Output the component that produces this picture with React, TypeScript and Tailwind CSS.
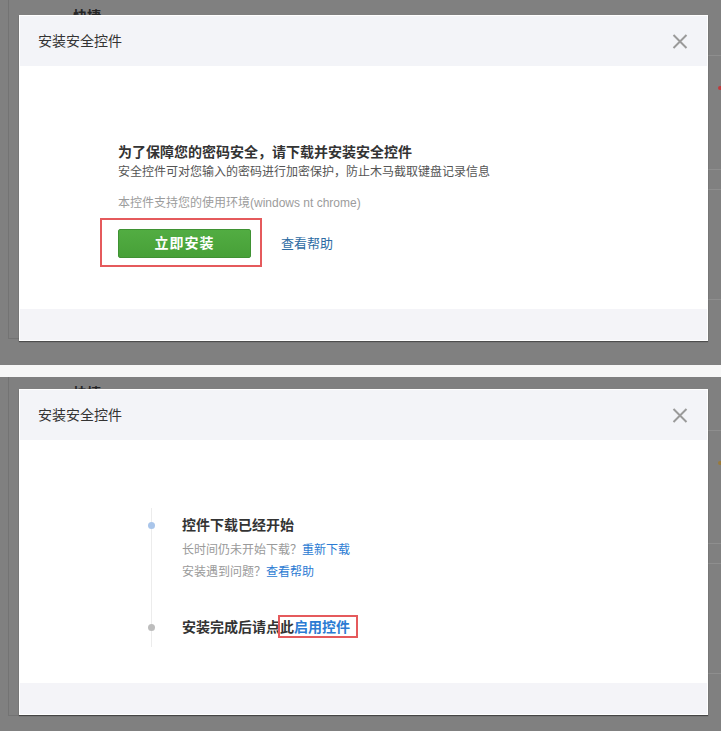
import React from "react";

const FONT = "font-['Liberation_Sans','Noto_Sans_CJK_SC',sans-serif]";

function CloseIcon() {
  return (
    <svg width="16" height="15" viewBox="0 0 16 15" className="block">
      <path d="M1.5 1 L14.5 14 M14.5 1 L1.5 14" stroke="#9a9a9a" strokeWidth="2" fill="none" />
    </svg>
  );
}

function Dialog({ children, top }: { children: React.ReactNode; top: string }) {
  return (
    <div className={`absolute left-[19px] ${top} z-10 w-[689px] bg-white p-px shadow-[0_1px_1px_rgba(0,0,0,0.4)]`}>
      <div className="flex h-[50px] items-center justify-between bg-[#f3f4f8] pl-[18px] pr-[19px]">
        <span className="text-[14px] leading-[20px] text-[#333]">安装安全控件</span>
        <CloseIcon />
      </div>
      <div className="h-[243px]">{children}</div>
      <div className="h-[31px] bg-[#f4f4f8]" />
    </div>
  );
}

/* the dimmed page that lies under the modal */
function BackdropPage({ rows, dot }: { rows: string[]; dot: string }) {
  return (
    <div className="flex h-full pl-[8px]">
      <div className="flex flex-1 flex-col">
        <div className="flex h-[339px] border-b border-l border-[#737373] pl-[64px] pt-[6px]">
          <span className="text-[14px] font-bold leading-[20px] text-[#262626]">快捷</span>
        </div>
      </div>
      <div className="flex w-[13px] flex-col">
        {rows.map((h, i) => (
          <div key={i} className={`${h} relative border-b border-[#8e8e8e]`}>
            {i === 1 && <span className={`absolute right-0 top-[30px] h-[4px] w-[3px] rounded-l-full ${dot}`} />}
          </div>
        ))}
      </div>
    </div>
  );
}

export default function App() {
  return (
    <div className={`${FONT} h-[731px] w-[721px] overflow-hidden bg-[#f7f7f7]`}>
      {/* Panel 1 */}
      <div className="relative h-[365px] bg-[#808080]">
        <BackdropPage rows={["h-[56px]", "h-[114px]", "h-[20px]", "h-[110px]"]} dot="bg-[#c0393b]" />
        <Dialog top="top-[15px]">
          <div className="pl-[98px] pt-[76px]">
            <div className="text-[14px] font-bold leading-[20px] text-[#333]">
              为了保障您的密码安全，请下载并安装安全控件
            </div>
            <div className="text-[12px] leading-[20px] text-[#555]">
              安全控件可对您输入的密码进行加密保护，防止木马截取键盘记录信息
            </div>
            <div className="mt-[11px] text-[12px] leading-[20px] text-[#9c9c9c]">
              本控件支持您的使用环境(windows nt chrome)
            </div>
            <div className="mt-[16px] flex items-center gap-[30px]">
              <div className="relative">
                <button className="flex h-[29px] w-[133px] items-center justify-center rounded-[2px] border border-[#3f9233] bg-[linear-gradient(#52ad42,#47a038)] text-[14px] font-bold tracking-[1px] text-white">
                  立即安装
                </button>
                <div className="pointer-events-none absolute -bottom-[9px] -left-[18px] -right-[11px] -top-[11px] border-2 border-[#e55a5c]" />
              </div>
              <a className="text-[13px] leading-[20px] text-[#2d6ba3]">查看帮助</a>
            </div>
          </div>
        </Dialog>
      </div>

      {/* Separator */}
      <div className="h-[12px] bg-[#f7f7f7]" />

      {/* Panel 2 */}
      <div className="relative h-[354px] bg-[#808080]">
        <BackdropPage rows={["h-[54px]", "h-[113px]", "h-[20px]", "h-[110px]"]} dot="bg-[#9a7a3a]" />
        <Dialog top="top-[12px]">
          <div className="pt-[75px]">
            <div className="relative ml-[128px] flex flex-col">
              <div className="absolute -bottom-[10px] -top-[7px] left-[3px] w-px bg-[#ececec]" />
              <div className="relative flex items-center gap-[27px] text-[14px] font-bold leading-[20px] text-[#333]">
                <span className="h-[7px] w-[7px] shrink-0 rounded-full bg-[#a9c5ea]" />
                控件下载已经开始
              </div>
              <div className="mt-[5px] pl-[34px] text-[12px] leading-[20px] text-[#9a9a9a]">
                长时间仍未开始下载？<a className="text-[#2b7bd3]">重新下载</a>
              </div>
              <div className="mt-[2px] pl-[34px] text-[12px] leading-[20px] text-[#9a9a9a]">
                安装遇到问题？<a className="text-[#2b7bd3]">查看帮助</a>
              </div>
              <div className="relative mt-[35px] flex items-center gap-[27px] text-[14px] font-bold leading-[20px] text-[#333]">
                <span className="h-[7px] w-[7px] shrink-0 rounded-full bg-[#bdbdbd]" />
                <span>
                  安装完成后请点此
                  <span className="relative inline-block h-[20px] text-[#2b7bd3]">
                    启用控件
                    <span className="pointer-events-none absolute -bottom-[1px] -left-[16px] -right-[8px] -top-[2px] border-2 border-[#e55a5c]" />
                  </span>
                </span>
              </div>
            </div>
          </div>
        </Dialog>
      </div>
    </div>
  );
}
